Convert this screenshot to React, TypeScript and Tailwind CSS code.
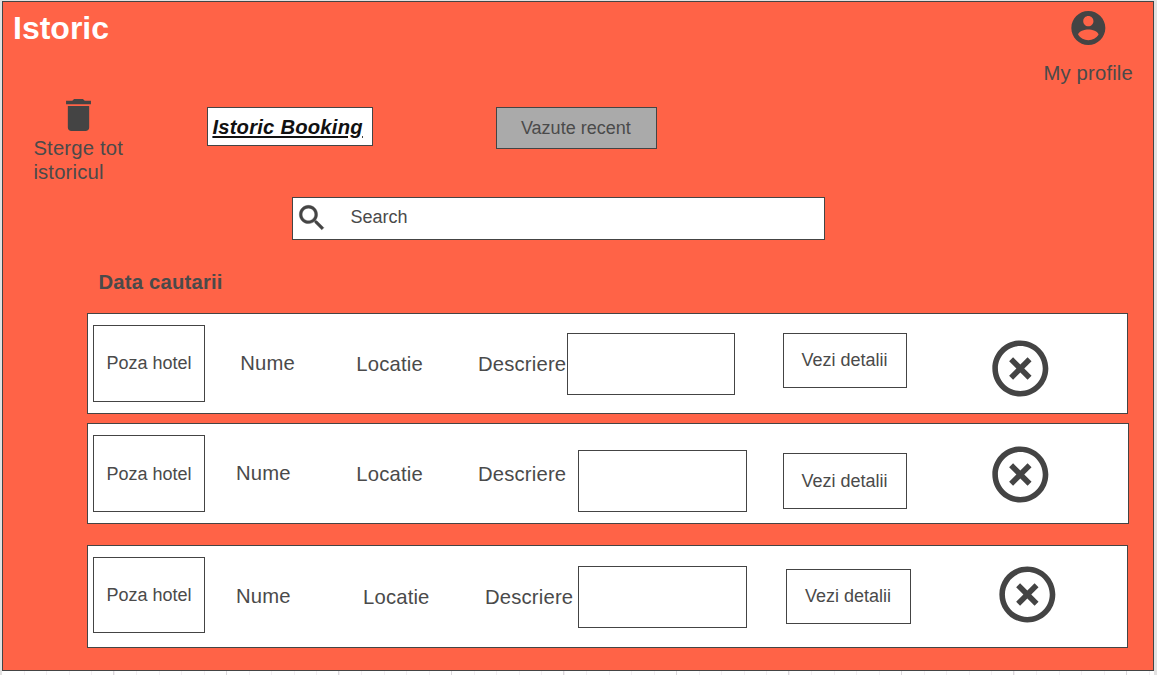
const ACCOUNT =
  "M12 2C6.48 2 2 6.48 2 12s4.48 10 10 10 10-4.48 10-10S17.52 2 12 2zm0 3c1.66 0 3 1.34 3 3s-1.34 3-3 3-3-1.34-3-3 1.34-3 3-3zm0 14.2c-2.5 0-4.71-1.28-6-3.22.03-1.99 4-3.08 6-3.08 1.99 0 5.97 1.09 6 3.08-1.29 1.94-3.5 3.22-6 3.22z";
const TRASH =
  "M6 19c0 1.1.9 2 2 2h8c1.1 0 2-.9 2-2V7H6v12zM19 4h-3.5l-1-1h-5l-1 1H5v2h14V4z";
const SEARCH =
  "M15.5 14h-.79l-.28-.27C15.41 12.59 16 11.11 16 9.5 16 5.91 13.09 3 9.5 3S3 5.91 3 9.5 5.91 16 9.5 16c1.61 0 3.09-.59 4.23-1.57l.27.28v.79l5 4.99L20.49 19l-4.99-5zm-6 0C7.01 14 5 11.99 5 9.5S7.01 5 9.5 5 14 7.01 14 9.5 11.99 14 9.5 14z";
const REMOVE =
  "M14.59 8L12 10.59 9.41 8 8 9.41 10.59 12 8 14.59 9.41 16 12 13.41 14.59 16 16 14.59 13.41 12 16 9.41 14.59 8zM12 2C6.47 2 2 6.47 2 12s4.47 10 10 10 10-4.47 10-10S17.53 2 12 2zm0 18c-4.41 0-8-3.59-8-8s3.59-8 8-8 8 3.59 8 8-3.59 8-8 8z";

type IconProps = { d: string; viewBox: string; className: string };

function Icon({ d, viewBox, className }: IconProps) {
  return (
    <svg viewBox={viewBox} className={"block shrink-0 overflow-visible fill-[#444] " + className} aria-hidden="true">
      <path d={d} />
    </svg>
  );
}

type Row = {
  row: string;
  photo: string;
  name: string;
  place: string;
  about: string;
  field: string;
  action: string;
  remove: string;
};

const rows: Row[] = [
  {
    row: "h-[101px] w-[1041px]",
    photo: "h-[77px] pb-[2px]",
    name: "mt-[37px] ml-[35.3px] w-[116px]",
    place: "mt-[38px] w-[121.7px]",
    about: "mt-[38px] w-[89px]",
    field: "mt-[19px] w-[168px]",
    action: "mt-[19px] ml-[48px] h-[55px] w-[124px] pb-[2px]",
    remove: "mt-[26px] ml-[85px]",
  },
  {
    row: "mt-[9px] h-[101px] w-[1042px]",
    photo: "h-[77px]",
    name: "mt-[37px] ml-[31px] w-[120.3px]",
    place: "mt-[38px] w-[121.7px]",
    about: "mt-[38px] w-[100px]",
    field: "mt-[26px] w-[169px]",
    action: "mt-[29px] ml-[36px] h-[56px] w-[124px]",
    remove: "mt-[22px] ml-[85px]",
  },
  {
    row: "mt-[21px] h-[103px] w-[1041px]",
    photo: "h-[76px]",
    name: "mt-[38px] ml-[31px] w-[127px]",
    place: "mt-[39px] w-[122px]",
    about: "mt-[39px] w-[93px]",
    field: "mt-[20px] w-[169px]",
    action: "mt-[23px] ml-[39px] h-[55px] w-[125px] pb-[2px]",
    remove: "mt-[20px] ml-[88px]",
  },
];

const label = "shrink-0 whitespace-nowrap text-[20.25px] leading-[24px] tracking-[0.18px] ";
const box = "flex shrink-0 items-center justify-center border border-[#444] text-[18px] leading-[22px] ";

function HistoryRow({ r }: { r: Row }) {
  return (
    <li className={"flex items-start border border-[#444] bg-white " + r.row}>
      <div className={box + "mt-[11px] ml-[5px] w-[112px] " + r.photo}>Poza hotel</div>
      <span className={label + r.name}>Nume</span>
      <span className={label + r.place}>Locatie</span>
      <span className={label + r.about}>Descriere</span>
      <div className={"h-[62px] shrink-0 border border-[#444] " + r.field} />
      <button className={box + "pr-px " + r.action}>Vezi detalii</button>
      <button className={"shrink-0 " + r.remove} aria-label="X">
        <Icon d={REMOVE} viewBox="1.88 1.82 20 20" className="size-[56px]" />
      </button>
    </li>
  );
}

export default function App() {
  return (
    <div className="h-[675px] w-[1157px] overflow-hidden bg-[#e2e2e2] pt-px pl-[2px] font-['Liberation_Sans',Arial,sans-serif] text-[#4a4a4a]">
      <main className="h-[670px] w-[1152px] border border-[#444] bg-[#ff6347]">
        <header className="flex h-[96px] items-start justify-between">
          <h1 className="mt-[7px] ml-[10px] text-[32px] leading-[38px] font-bold text-white">Istoric</h1>
          <div className="mt-[9px] mr-[20px] flex flex-col items-center">
            <Icon d={ACCOUNT} viewBox="1.8 2 20 20" className="size-[34px]" />
            <span className={label + "mt-[16px]"}>My profile</span>
          </div>
        </header>

        <section className="flex h-[99px] items-start">
          <div className="ml-[30px] w-[174px]">
            <Icon d={TRASH} viewBox="5 3 14 18" className="mt-px ml-[33px] h-[32px] w-[25px]" />
            <p className="mt-[5px] w-[110px] pl-[0.4px] text-[20.25px] leading-[24px] tracking-[0.18px]">
              Sterge tot istoricul
            </p>
          </div>
          <button className="mt-[9px] flex h-[39px] w-[166px] items-center border border-[#444] bg-white pl-[4.4px] text-[20.25px] leading-[24px] font-bold tracking-[0.2px] whitespace-nowrap text-[#111] italic underline">
            Istoric Booking
          </button>
          <button className={box + "mt-[9px] ml-[123px] h-[42px] w-[161px] bg-[#aaa] pr-[1.4px]"}>Vazute recent</button>
        </section>

        <div className="ml-[289px] flex h-[43px] w-[533px] items-start border border-[#444] bg-white">
          <Icon d={SEARCH} viewBox="2.75 2.75 17.49 17.49" className="mt-[7px] ml-[6px] size-[24.5px] stroke-[#444] stroke-[0.3]" />
          <span className="mt-[8px] ml-[27px] text-[18px] leading-[22px]">Search</span>
        </div>

        <h2 className="mt-[30px] ml-[95.5px] text-[20.25px] leading-[24px] font-bold tracking-[0.2px]">Data cautarii</h2>

        <ul className="mt-[19px] ml-[84px]">
          {rows.map((r, i) => (
            <HistoryRow key={i} r={r} />
          ))}
        </ul>
      </main>
      <div className="h-[4px] w-[1152px] bg-white bg-[repeating-linear-gradient(90deg,transparent_0_111.4px,#dddade_111.4px_112.5px),repeating-linear-gradient(90deg,transparent_0_22px,#f3eff3_22px_23px,transparent_23px_44px,#f3eff3_44px_45px)]" />
    </div>
  );
}
